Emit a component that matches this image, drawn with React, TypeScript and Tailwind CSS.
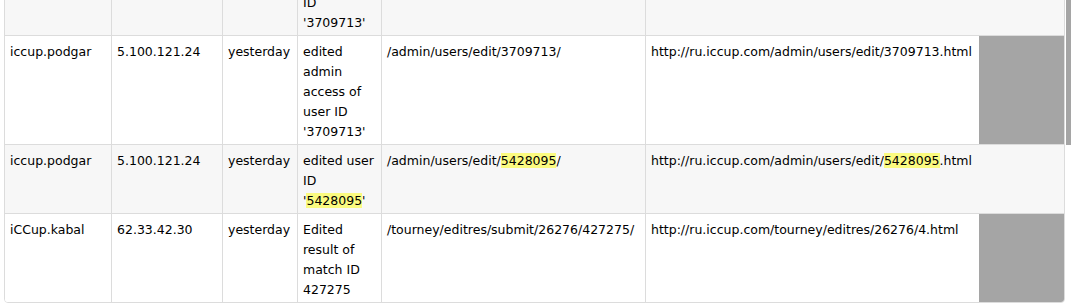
import React from "react";

const HL = ({ children }: { children: React.ReactNode }) => (
  <span className="bg-[#fbfb80]">{children}</span>
);

type Row = {
  user: string;
  ip: string;
  when: string;
  action: React.ReactNode;
  path: React.ReactNode;
  url: React.ReactNode;
  striped: boolean;
  gray: boolean;
};

const rows: Row[] = [
  {
    user: "",
    ip: "",
    when: "",
    action: (
      <>
        edited user
        <br />
        ID
        <br />
        '3709713'
      </>
    ),
    path: "",
    url: "",
    striped: true,
    gray: false,
  },
  {
    user: "iccup.podgar",
    ip: "5.100.121.24",
    when: "yesterday",
    action: (
      <>
        edited
        <br />
        admin
        <br />
        access of
        <br />
        user ID
        <br />
        '3709713'
      </>
    ),
    path: "/admin/users/edit/3709713/",
    url: "http://ru.iccup.com/admin/users/edit/3709713.html",
    striped: false,
    gray: true,
  },
  {
    user: "iccup.podgar",
    ip: "5.100.121.24",
    when: "yesterday",
    action: (
      <>
        edited user
        <br />
        ID
        <br />
        '<HL>5428095</HL>'
      </>
    ),
    path: (
      <>
        /admin/users/edit/<HL>5428095</HL>/
      </>
    ),
    url: (
      <>
        http://ru.iccup.com/admin/users/edit/<HL>5428095</HL>.html
      </>
    ),
    striped: true,
    gray: false,
  },
  {
    user: "iCCup.kabal",
    ip: "62.33.42.30",
    when: "yesterday",
    action: (
      <>
        Edited
        <br />
        result of
        <br />
        match ID
        <br />
        427275
      </>
    ),
    path: "/tourney/editres/submit/26276/427275/",
    url: "http://ru.iccup.com/tourney/editres/26276/4.html",
    striped: false,
    gray: true,
  },
];

const cell = "shrink-0 whitespace-nowrap pl-[5px] pt-[6px] pb-[2px]";

export default function App() {
  return (
    <div className="flex items-start bg-white font-['DejaVu_Sans',Verdana,sans-serif] text-[12.5px] leading-[20px] text-[#000]">
      <div className="ml-[4px] -mt-[34px] w-[1061px] shrink-0 overflow-hidden rounded-[4px] border border-[#dcdcdc]">
        {rows.map((r, i) => (
          <div
            key={i}
            className={`flex ${i > 0 ? "border-t border-[#dcdcdc]" : ""} ${
              r.striped ? "bg-[#f7f7f7]" : "bg-white"
            }`}
          >
            <div className={`${cell} w-[106px]`}>{r.user}</div>
            <div className={`${cell} w-[111px] border-l border-[#dcdcdc]`}>{r.ip}</div>
            <div className={`${cell} w-[75px] border-l border-[#dcdcdc]`}>{r.when}</div>
            <div className={`${cell} w-[84px] border-l border-[#dcdcdc] pl-[4px]`}>{r.action}</div>
            <div className={`${cell} w-[264px] border-l border-[#dcdcdc]`}>{r.path}</div>
            <div className={`${cell} w-[334px] border-l border-[#dcdcdc]`}>{r.url}</div>
            <div className={`w-[85px] shrink-0 ${r.gray ? "bg-[#a5a5a5]" : ""}`} />
          </div>
        ))}
      </div>
      <div className="ml-[1px] h-[145px] w-[5px] shrink-0 bg-[#a5a5a5]" />
    </div>
  );
}
